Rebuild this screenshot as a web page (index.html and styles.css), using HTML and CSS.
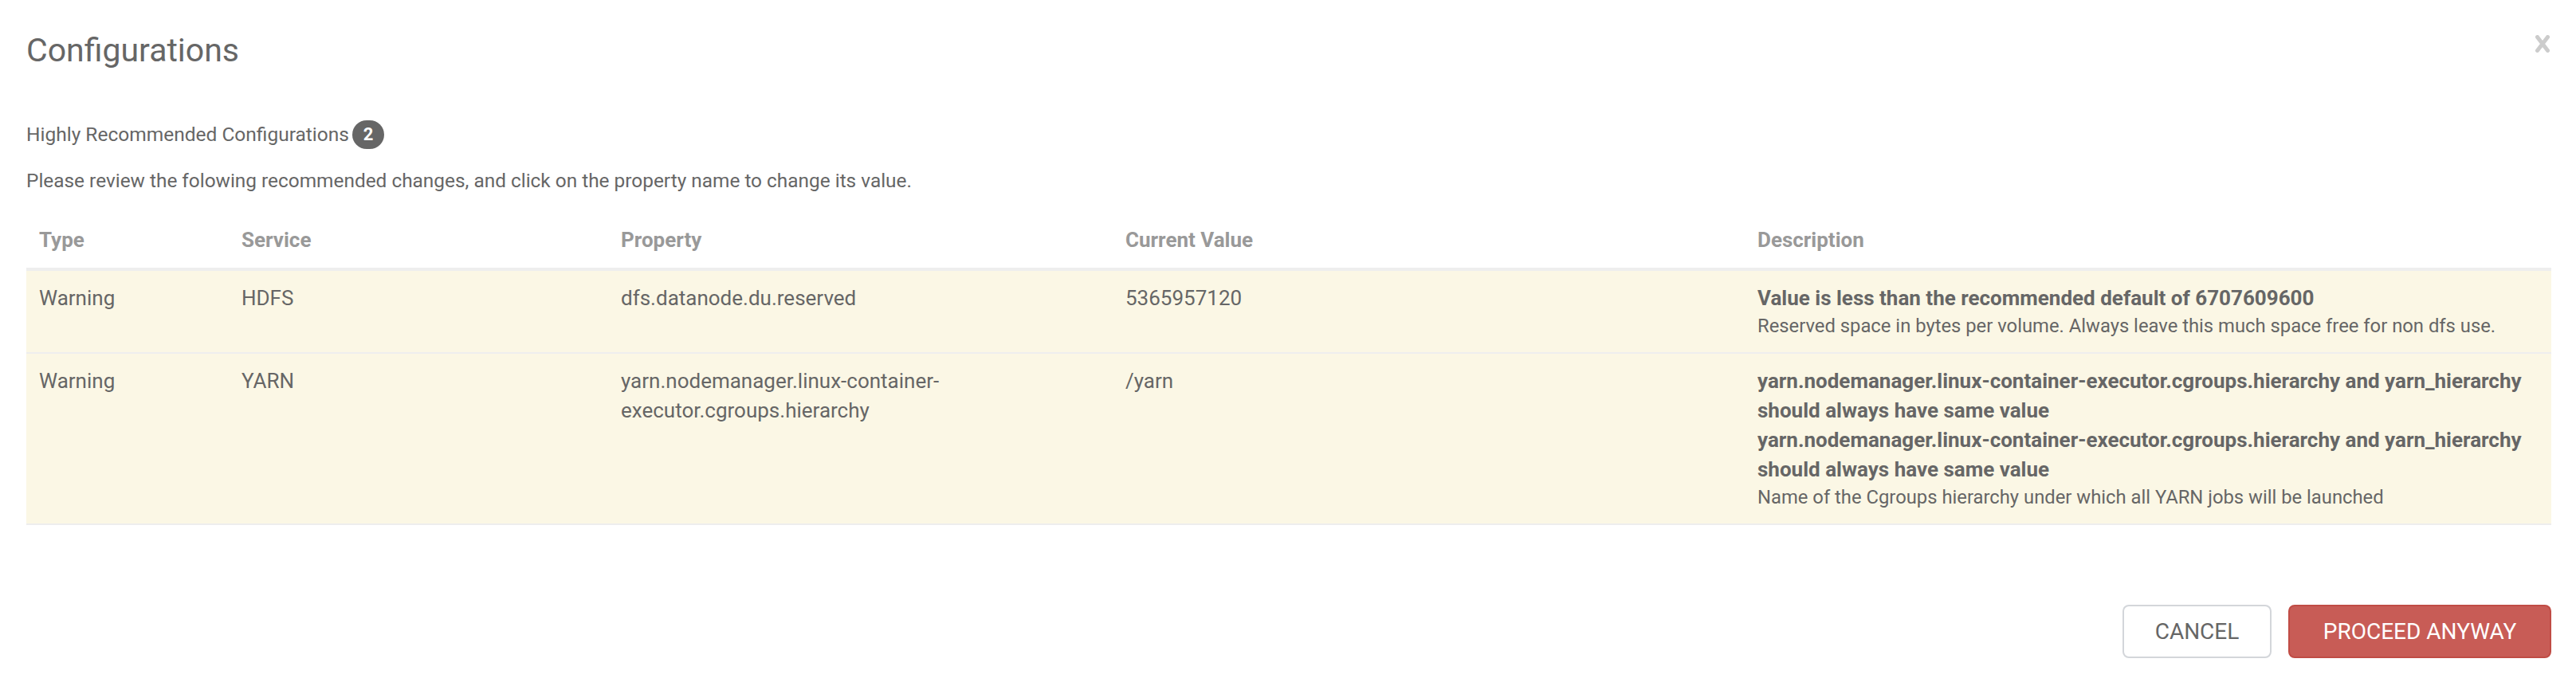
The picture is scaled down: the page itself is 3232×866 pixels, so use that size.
FILE: index.html
```html
<!DOCTYPE html>
<html lang="en">
<head>
<meta charset="utf-8">
<title>Configurations</title>
<link rel="stylesheet" href="styles.css">
</head>
<body>
<div class="modal">
  <div class="modal-header">
    <h4 class="modal-title">Configurations</h4>
    <button class="close" aria-label="Close">
      <svg width="18" height="22" viewBox="0 0 18 22"><path d="M2.5 2.5 L15.5 19.5 M15.5 2.5 L2.5 19.5" stroke="#cccccc" stroke-width="5" stroke-linecap="round"/></svg>
    </button>
  </div>
  <div class="modal-body">
    <div class="section-title">Highly Recommended Configurations<span class="badge">2</span></div>
    <p class="intro">Please review the folowing recommended changes, and click on the property name to change its value.</p>
    <table class="config-table">
      <colgroup>
        <col class="c-type"><col class="c-service"><col class="c-property"><col class="c-value"><col class="c-desc">
      </colgroup>
      <thead>
        <tr><th>Type</th><th>Service</th><th>Property</th><th>Current Value</th><th>Description</th></tr>
      </thead>
      <tbody>
        <tr class="warning">
          <td>Warning</td>
          <td>HDFS</td>
          <td>dfs.datanode.du.reserved</td>
          <td>5365957120</td>
          <td>
            <div class="msg">Value is less than the recommended default of 6707609600</div>
            <div class="hint">Reserved space in bytes per volume. Always leave this much space free for non dfs use.</div>
          </td>
        </tr>
        <tr class="warning">
          <td>Warning</td>
          <td>YARN</td>
          <td>yarn.nodemanager.linux-container-executor.cgroups.hierarchy</td>
          <td>/yarn</td>
          <td>
            <div class="msg">yarn.nodemanager.linux-container-executor.cgroups.hierarchy and yarn_hierarchy should always have same value</div>
            <div class="msg">yarn.nodemanager.linux-container-executor.cgroups.hierarchy and yarn_hierarchy should always have same value</div>
            <div class="hint">Name of the Cgroups hierarchy under which all YARN jobs will be launched</div>
          </td>
        </tr>
      </tbody>
    </table>
  </div>
  <div class="modal-footer">
    <button class="btn btn-default">CANCEL</button>
    <button class="btn btn-danger">PROCEED ANYWAY</button>
  </div>
</div>
</body>
</html>
```

FILE: styles.css
```css
html, body {
  margin: 0;
  padding: 0;
  background: #ffffff;
}

body {
  font-family: Roboto, "Liberation Sans", Arial, sans-serif;
  color: #666666;
}

.modal {
  position: relative;
  padding: 0 31px 0 33px;
}

.modal-header {
  padding-top: 41px;
}

.modal-title {
  margin: 0;
  font-size: 41px;
  line-height: 44px;
  font-weight: 400;
  color: #666666;
}

.close {
  position: absolute;
  top: 44px;
  right: 33px;
  padding: 0;
  margin: 0;
  border: 0;
  background: transparent;
  line-height: 0;
  cursor: pointer;
}

.modal-body {
  padding-top: 66px;
}

.section-title {
  font-size: 24.5px;
  line-height: 36px;
  display: flex;
  align-items: center;
}

.badge {
  display: inline-block;
  margin-left: 4px;
  height: 36px;
  min-width: 40px;
  box-sizing: border-box;
  padding: 0 12px;
  border-radius: 18px;
  background: #666666;
  color: #ffffff;
  font-size: 22px;
  font-weight: 700;
  line-height: 36px;
  text-align: center;
}

.intro {
  margin: 23px 0 23px;
  font-size: 24.4px;
  line-height: 34px;
}

.config-table {
  width: 100%;
  table-layout: fixed;
  border-collapse: collapse;
  font-size: 26px;
  line-height: 37px;
}

.c-type { width: 254px; }
.c-service { width: 476px; }
.c-property { width: 633px; }
.c-value { width: 793px; }

.config-table th {
  text-align: left;
  font-weight: 700;
  color: #999999;
  padding: 16px;
  border-bottom: 4px solid #eeeeee;
  vertical-align: bottom;
}

.config-table td {
  padding: 16px;
  vertical-align: top;
  border-bottom: 2px solid #eeeeee;
  color: #666666;
}

.config-table tr.warning td {
  background: #fbf7e5;
}

.msg {
  font-weight: 700;
}

.hint {
  font-size: 23.8px;
  line-height: 33px;
}

.modal-footer {
  display: flex;
  justify-content: flex-end;
  gap: 21px;
  margin-top: 100px;
}

.btn {
  box-sizing: border-box;
  height: 67px;
  font-family: Roboto, "Liberation Sans", Arial, sans-serif;
  font-size: 28px;
  line-height: 40px;
  border-radius: 8px;
  cursor: pointer;
}

.btn-default {
  width: 187px;
  background: #ffffff;
  color: #666666;
  border: 2px solid #d3d6da;
}

.btn-danger {
  width: 330px;
  background: #c85c56;
  color: #ffffff;
  border: 2px solid #c04c45;
}
```
